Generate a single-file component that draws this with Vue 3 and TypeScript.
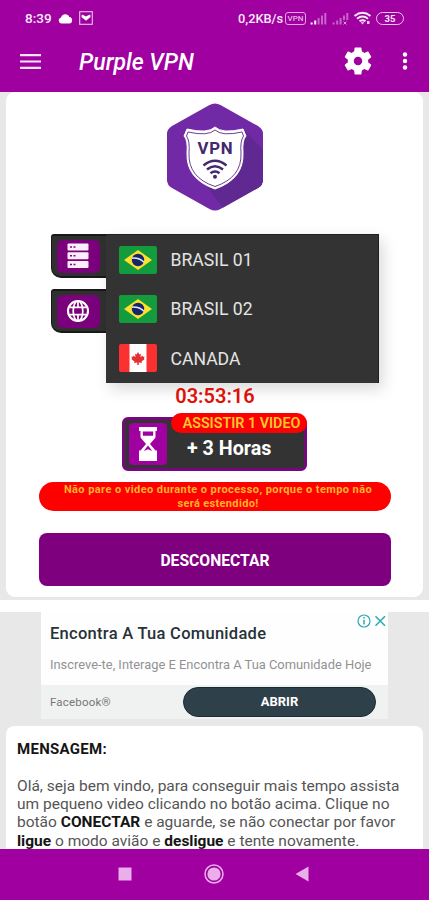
<script setup lang="ts">
interface Server {
  name: string
  flag: 'br' | 'ca'
}

const servers: Server[] = [
  { name: 'BRASIL 01', flag: 'br' },
  { name: 'BRASIL 02', flag: 'br' },
  { name: 'CANADA', flag: 'ca' },
]
</script>

<template>
  <div class="screen">
    <header class="top">
      <div class="status">
        <span class="clock">8:39</span>
        <svg class="cloud" width="15" height="11" viewBox="0 0 15 11"><path d="M3.6 10.5a3.1 3.1 0 0 1-.5-6.1A4.3 4.3 0 0 1 11.3 4a3.3 3.3 0 0 1 .2 6.5z" fill="#fff" /></svg>
        <svg class="mail" width="14" height="14" viewBox="0 0 14 14"><rect x=".7" y=".7" width="12.6" height="12.6" fill="none" stroke="#ecc4ec" stroke-width="1.1" /><path d="M2.8 3.400 L5.200 4.600 L7 5.600 L8.800 4.600 L11.200 3.400 L11.500 6 L7 9.800 L2.500 6z" fill="#fff" /></svg>
        <span class="speed">0,2KB/s</span>
        <span class="vpn-tag">VPN</span>
        <svg class="signal" width="17" height="13" viewBox="0 0 17 13"><path d="M.6 12.500v-2h2v2zM4.200 12.500v-4h2v4z" fill="#fff" /><path d="M7.600 12.500v-6.500h2v6.500zM11 12.500V3.500h2v9zM14.300 12.500V1h2v11.500z" fill="#c865c8" /></svg>
        <svg class="signal2" width="17" height="13" viewBox="0 0 17 13"><path d="M.6 12.500v-2h2v2zM4.200 12.500v-4h2v4zM7.600 12.500v-6.500h2v6.500zM11 8V3.500h2V8zM14.300 8V1h2v7z" fill="#c568c5" /><path d="M11.500 9.500l3 3m0-3l-3 3" stroke="#d996d9" /></svg>
        <svg class="wifi" width="19" height="14" viewBox="0 0 19 14"><g fill="none" stroke="#fbeafb" stroke-width="1.900"><path d="M1.500 5q8-6.500 16 0" /><path d="M4 7.700q5.500-4.400 11 0" /><path d="M6.500 10.300q3-2.300 6 0" /></g><path d="M7.600 11.200h3.800l-1.900 2.300zM14 10h2.500v3H14z" fill="#efd0ef" /></svg>
        <span class="battery">35</span>
      </div>
      <div class="bar">
        <svg class="burger" width="21" height="15" viewBox="0 0 21 15"><path d="M0 1.200h21M0 7.500h21M0 13.800h21" stroke="#f8e4f8" stroke-width="2.200" /></svg>
        <h1 class="title">Purple VPN</h1>
        <svg class="gear" width="34" height="34" viewBox="0 0 24 24"><path fill="#fff" d="M19.140 12.940c.04-.3.060-.610.060-.940 0-.320-.020-.640-.070-.940l2.030-1.580c.18-.14.230-.410.120-.610l-1.920-3.320c-.120-.220-.370-.290-.590-.220l-2.390.960c-.5-.380-1.030-.7-1.620-.940l-.360-2.540c-.040-.240-.240-.410-.480-.410h-3.840c-.240 0-.430.170-.470.410l-.360 2.540c-.590.240-1.130.570-1.620.940l-2.390-.960c-.220-.080-.470 0-.590.220L2.740 8.870c-.120.210-.080.470.120.610l2.030 1.580c-.050.3-.090.630-.090.940s.020.640.070.940l-2.030 1.580c-.18.14-.230.410-.120.610l1.920 3.320c.120.220.370.290.590.220l2.390-.960c.5.380 1.030.7 1.620.940l.36 2.540c.050.240.240.410.480.410h3.840c.240 0 .440-.170.470-.410l.36-2.540c.590-.240 1.130-.560 1.620-.940l2.390.960c.220.080.470 0 .590-.220l1.920-3.320c.120-.220.070-.470-.120-.610zM12 15a3 3 0 1 1 0-6 3 3 0 0 1 0 6z" /></svg>
        <svg class="dots" width="6" height="20" viewBox="0 0 6 20"><g fill="#fff"><circle cx="3" cy="3.500" r="2.200" /><circle cx="3" cy="10" r="2.200" /><circle cx="3" cy="16.500" r="2.200" /></g></svg>
      </div>
    </header>

    <main class="content">
      <section class="card">
        <svg class="logo" width="96" height="108" viewBox="0 0 96 108">
          <defs><clipPath id="hex"><path d="M42.500 2Q48-1 53.500 2L91 23Q96 26 96 31V77Q96 82 91 85L53.500 106Q48 109 42.500 106L5 85Q0 82 0 77V31Q0 26 5 23z" /></clipPath></defs>
          <g clip-path="url(#hex)">
            <path d="M0 0h96v108H0z" fill="#7129a6" />
            <path d="M78 28L96 47v61H58L36 78z" fill="#5f2991" />
          </g>
          <path d="M48 24Q55 31 76 26L79 33Q75 37 76 50Q77 76 48 86Q19 76 20 50Q21 37 17 33L20 26Q41 31 48 24z" fill="#fff" stroke="#fff" stroke-width="1" />
          <path d="M48 27Q55 33.500 75 29L76.500 33Q73 38 74 50Q75 74.500 48 83.500Q21 74.500 22 50Q23 38 19.500 33L21 29Q41 33.500 48 27z" fill="#fff" stroke="#67408a" stroke-width="1" />
          <text x="48.500" y="51" text-anchor="middle" class="logo-text">VPN</text>
          <g fill="none" stroke="#45286c" stroke-width="2.500"><path d="M36.500 62.500q11.500-9.500 23 0" /><path d="M40 66.500q8-6.500 16 0" /><path d="M43.500 70.300q4.500-3.500 9 0" /></g>
          <circle cx="48" cy="73.800" r="2" fill="#45286c" />
        </svg>

        <div class="picker">
          <div class="tabs">
            <div class="tab">
              <span class="tile">
                <svg width="22" height="26" viewBox="0 0 22 26"><g fill="#fbeefb"><rect x=".5" y=".5" width="21" height="7" rx="1" /><rect x=".5" y="9.300" width="21" height="7" rx="1" /><rect x=".5" y="18.100" width="21" height="7" rx="1" /></g><path d="M3 4h2m1.500 0h2M3 12.800h2m1.500 0h2M3 21.600h2m1.500 0h2" stroke="#7b087b" stroke-width="1.500" /></svg>
              </span>
            </div>
            <div class="tab">
              <span class="tile">
                <svg width="24" height="24" viewBox="0 0 24 24"><circle cx="12" cy="12" r="10" fill="none" stroke="#fff" stroke-width="2.100" /><ellipse cx="12" cy="12" rx="4.800" ry="10" fill="none" stroke="#fff" stroke-width="1.700" /><path d="M3.500 8.300h17M3.500 15.700h17M12 2v6M12 16v6" stroke="#fff" stroke-width="1.700" /></svg>
              </span>
            </div>
          </div>
          <ul class="list">
            <li v-for="s in servers" :key="s.name" class="row">
              <svg v-if="s.flag === 'br'" width="38" height="28" viewBox="0 0 38 28"><rect width="38" height="28" rx="2" fill="#149b3d" /><path d="M19 4L33 14L19 24L5 14z" fill="#fce02b" /><circle cx="19" cy="14" r="6.200" fill="#17256f" /><path d="M13 12.200q7-.7 12 4" fill="none" stroke="#e5edf4" stroke-width="1.500" /></svg>
              <svg v-else width="38" height="28" viewBox="0 0 38 28"><rect width="38" height="28" rx="2" fill="#fb3030" /><path d="M10.500 0h17v28h-17z" fill="#fff" /><path d="M19 8l1.400 2.500 1.500-.7-.4 3.400 2-1.700.4 1.200 1.700-.2-.7 2 .9.600-3.300 2.500.4 1.300-3.200-.4.100 2.500h-1.600l.1-2.500-3.200.4.400-1.300-3.300-2.500.9-.6-.7-2 1.700.2.400-1.200 2 1.700-.4-3.400 1.500.7z" fill="#e52f30" /></svg>
              <span class="country">{{ s.name }}</span>
            </li>
          </ul>
        </div>

        <div class="timer">03:53:16</div>

        <div class="reward">
          <span class="glass">
            <svg width="20" height="34" viewBox="0 0 20 34"><path fill="#fff" fill-rule="evenodd" d="M1 0h18v4h-1.500v6.500L12 17l5.500 6.500H19V34H1V23.500h1.500L8 17l-5.500-6.500V4H1zM4.800 4.500v4.300h10.400V4.500zM10 18.500L5.700 24l4.300-1.800 4.300 1.800z" /></svg>
          </span>
          <span class="hours">+ 3 Horas</span>
          <span class="watch">ASSISTIR 1 VIDEO</span>
        </div>

        <p class="notice"><span class="n1">Não pare o video durante o processo, porque o tempo não</span><br><span class="n2">será estendido!</span></p>

        <button class="disconnect">DESCONECTAR</button>
      </section>

      <div class="strip"></div>

      <section class="ad">
        <div class="ad-main">
          <div class="ad-title">Encontra A Tua Comunidade</div>
          <div class="ad-text">Inscreve-te, Interage E Encontra A Tua Comunidade Hoje</div>
          <svg class="ad-choices" width="30" height="14" viewBox="0 0 30 14"><circle cx="7" cy="7" r="6" fill="none" stroke="#2ba9b2" stroke-width="1.200" /><path d="M7 5.800v4.700M7 3v1.600" stroke="#2ba9b2" stroke-width="1.500" /><path d="M18.500 2.200l9.500 9.600M28 2.200l-9.500 9.600" stroke="#2ba9b2" stroke-width="1.500" /></svg>
        </div>
        <div class="ad-foot">
          <span class="ad-brand">Facebook®</span>
          <span class="ad-open">ABRIR</span>
        </div>
      </section>

      <section class="message">
        <div class="m0"><b>MENSAGEM:</b></div>
        <div class="m1">Olá, seja bem vindo, para conseguir mais tempo assista</div>
        <div class="m2">um pequeno video clicando no botão acima. Clique no</div>
        <div class="m3">botão <b>CONECTAR</b> e aguarde, se não conectar por favor</div>
        <div class="m4"><b>ligue</b> o modo avião e <b>desligue</b> e tente novamente.</div>
      </section>
    </main>

    <nav class="nav">
      <svg width="14" height="14" viewBox="0 0 14 14"><path d="M.5.500h13v13H.5z" fill="#eaaeea" /></svg>
      <svg width="20" height="20" viewBox="0 0 20 20"><circle cx="10" cy="10" r="9" fill="none" stroke="#eaaeea" stroke-width="1.500" /><circle cx="10" cy="10" r="6.600" fill="#eaaeea" /></svg>
      <svg width="14" height="16" viewBox="0 0 14 16"><path d="M13.500.500v15L.5 8z" fill="#eaaeea" /></svg>
    </nav>
  </div>
</template>

<style>
body { margin: 0; }
</style>

<style scoped>
* { box-sizing: border-box; }
.screen {
  width: 429px;
  height: 900px;
  display: flex;
  flex-direction: column;
  overflow: hidden;
  background: #e8e8e8;
  font-family: Roboto, "Liberation Sans", sans-serif;
  white-space: nowrap;
}
.top { flex: none; height: 92px; background: #9f009f; color: #fff; }
.status { height: 36px; padding-left: 25px; display: flex; align-items: center; font-size: 13px; font-weight: 500; color: #fbeafb; }
.clock { width: 33px; font-size: 13.500px; }
.mail { margin-left: 6px; }
.speed { margin-left: 145px; width: 46px; font-size: 12.800px; }
.vpn-tag { width: 21px; height: 13px; margin-left: 1px; border: 1.500px solid #e3a5e3; border-radius: 3px; font-size: 8px; line-height: 11px; text-align: center; color: #e8b3e8; }
.signal { margin-left: 4px; }
.signal2 { margin-left: 5px; }
.wifi { margin-left: 4px; }
.battery { margin-left: 4px; width: 28px; height: 13px; border: 1.500px solid #edc5ed; border-radius: 7px; font-size: 9.500px; font-weight: 700; line-height: 11px; text-align: center; }
.bar { height: 50px; padding-left: 20px; display: flex; align-items: center; }
.title { margin: 0 0 0 38px; padding-top: 3px; width: 262px; font-size: 23px; font-weight: 500; font-style: italic; line-height: 28px; }
.dots { margin-left: 27px; }
.content { flex: 1; min-height: 0; overflow: hidden; }
.card {
  height: 505px;
  margin: 0 6px;
  padding-top: 11px;
  background: #fff;
  border-radius: 9px;
  display: flex;
  flex-direction: column;
  align-items: center;
}
.logo { flex: none; margin-left: 1px; display: block; }
.logo-text { font-size: 16.800px; font-weight: 700; letter-spacing: .8px; fill: #45286c; }
.picker { margin-top: 23px; display: flex; width: 328px; flex: none; }
.tabs { width: 55px; display: flex; flex-direction: column; gap: 11px; }
.tab { height: 44px; padding-left: 5px; background: #303030; border: solid #191919; border-width: 2px 0 2px 1px; border-radius: 3px 0 0 10px; display: flex; align-items: center; }
.tile { width: 43px; height: 33px; border-radius: 6px; background: #7b007b; display: flex; align-items: center; justify-content: center; }
.list { margin: 0; padding: 0; width: 273px; height: 149px; list-style: none; background: #333; border: solid #202020; border-width: 1px 1px 0 0; box-shadow: 4px 6px 14px rgba(0, 0, 0, .15); display: flex; flex-direction: column; }
.row { flex: 1; padding-left: 13px; display: flex; align-items: center; gap: 14px; }
.country { font-size: 17.600px; padding-top: 1px; color: #e4e4e4; }
.timer { margin-top: 1px; height: 24px; line-height: 24px; font-size: 20px; font-weight: 600; color: #dc1208; margin-left: 1px; }
.reward { flex: none; position: relative; margin-top: 9px; width: 185px; height: 54px; border: 3px solid #76087d; border-radius: 6px; background: #333; display: flex; align-items: center; }
.glass { width: 38px; height: 42px; margin-left: 4px; border-radius: 4px; background: #a000a0; display: flex; align-items: center; justify-content: center; }
.hours { margin: 9px 0 0 20px; font-size: 19.700px; line-height: 24px; font-weight: 700; color: #fff; }
.watch { position: absolute; left: 46px; top: -7px; width: 136px; height: 20px; padding-left: 5px; border-radius: 10px; background: #f00; color: #ffc82e; font-size: 14.300px; font-weight: 600; line-height: 21px; text-align: center; }
.notice { flex: none; margin: 11px 0 0; width: 352px; height: 29px; border-radius: 15px; background: #f00; color: #ffb42a; font-size: 11px; font-weight: 700; line-height: 14px; letter-spacing: .42px; text-align: center; padding: 1px 0 0 7px; }
.n2 { letter-spacing: .35px; }
.disconnect { flex: none; margin-top: 22px; padding: 2px 0 0 1px; width: 352px; height: 53px; border: 0; border-radius: 8px; background: #7f007f; color: #fff; font: 700 15.700px/20px Roboto, sans-serif; }
.strip { margin-top: 3px; height: 12px; background: #fff; }
.ad { width: 347px; margin-left: 41px; height: 107px; }
.ad-main { position: relative; height: 73px; padding: 12px 0 0 9px; background: #fefefe; }
.ad-title { font-size: 16.500px; font-weight: 500; line-height: 20px; letter-spacing: .28px; color: #263238; }
.ad-text { margin-top: 13px; font-size: 12.900px; line-height: 16px; color: #929292; }
.ad-choices { position: absolute; right: 1px; top: 2px; }
.ad-foot { height: 34px; padding: 0 12px 0 9px; background: #f0f1f1; display: flex; align-items: center; justify-content: space-between; }
.ad-brand { font-size: 11.500px; letter-spacing: .2px; color: #777; }
.ad-open { width: 193px; height: 30px; border-radius: 15px; background: #2e404a; border: 1px solid #1c2b33; color: #fff; font-size: 13px; font-weight: 700; line-height: 28px; text-align: center; }
.message { margin: 7px 6px 0; height: 140px; padding: 14px 11px 0; background: #fff; border-radius: 8px; font-size: 15.500px; line-height: 18.300px; color: #555; }
.message b { color: #151515; }
.m0 { margin-bottom: 18.500px; font-size: 15px; letter-spacing: .3px; }
.nav { flex: none; height: 51px; background: #9f009f; display: flex; align-items: center; padding: 0 120px 2px 118px; justify-content: space-between; }
</style>
